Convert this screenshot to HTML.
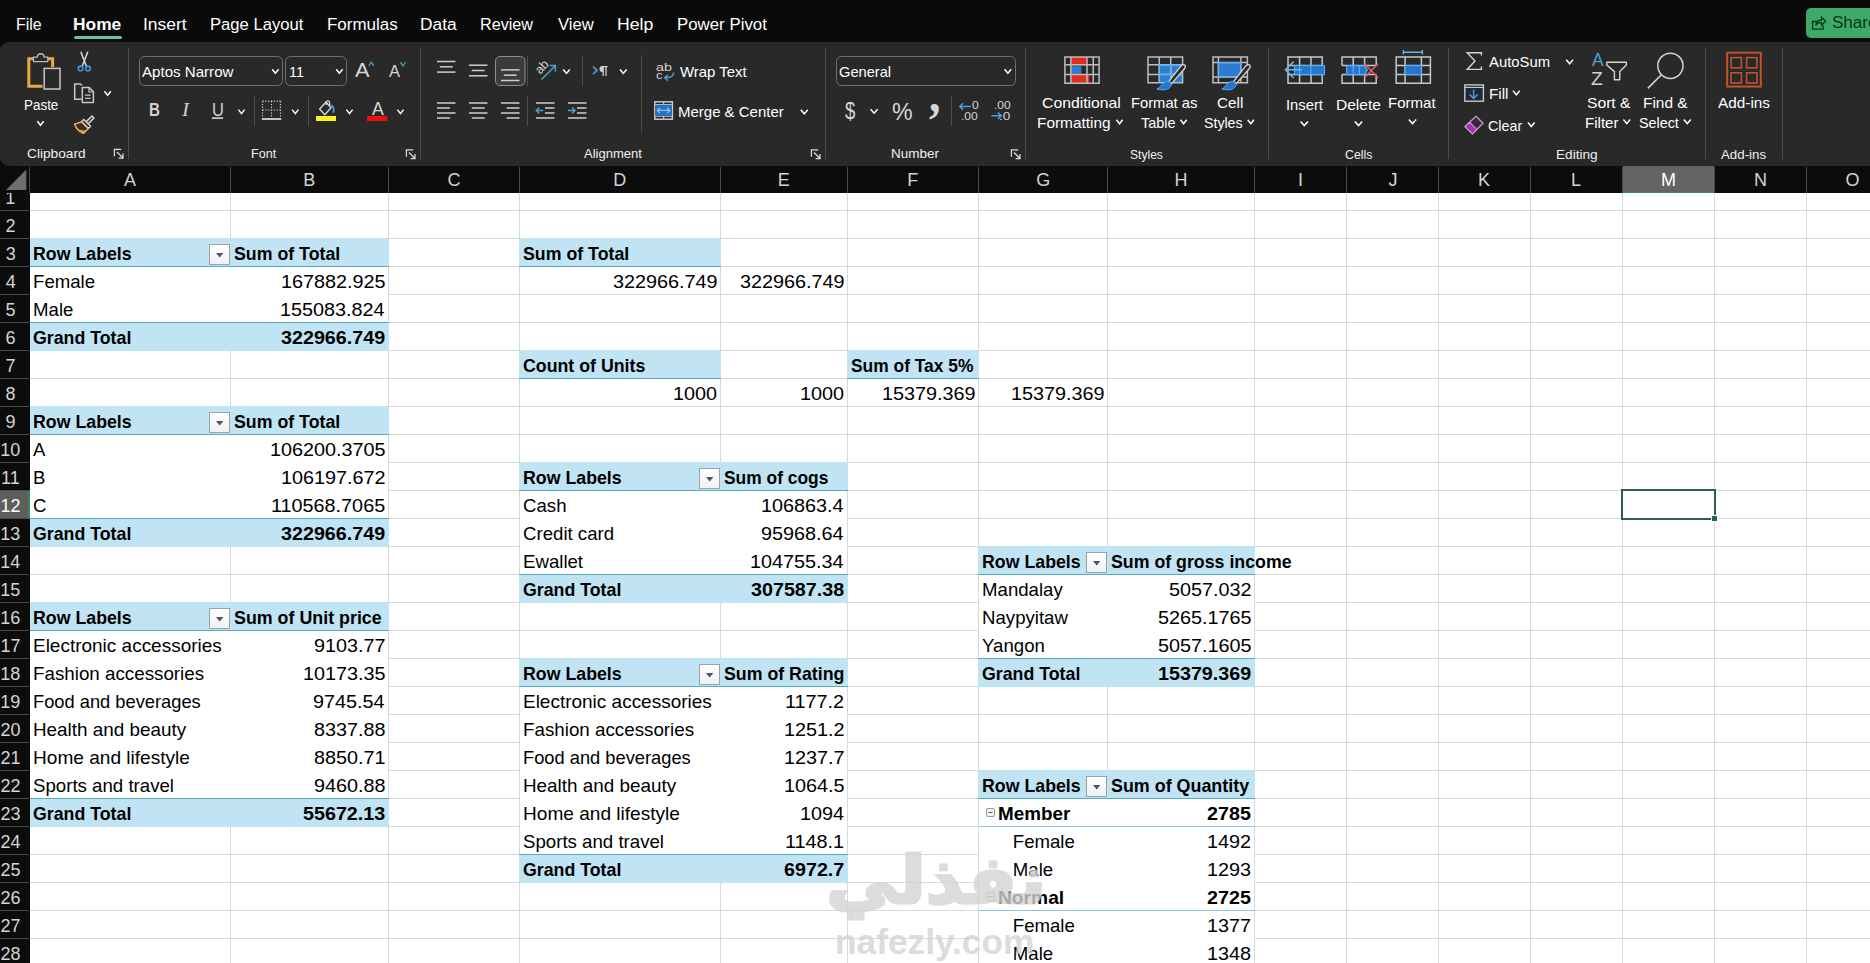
<!DOCTYPE html>
<html lang="en"><head><meta charset="utf-8"><title>Excel - Pivot Tables</title>
<style>
html,body{margin:0;padding:0;background:#0a0a0a;}
body{width:1870px;height:963px;overflow:hidden;position:relative;font-family:"Liberation Sans",sans-serif;color:#fff;}
.t{position:absolute;white-space:pre;line-height:1;transform-origin:0 50%;}
.r{position:absolute;}
svg{position:absolute;left:0;top:0;overflow:visible;}
</style></head>
<body>
<div id="sheet" class="r" style="left:0;top:166px;width:1870px;height:797px;background:#fff;overflow:hidden"></div>
<div class="r" style="left:30px;top:210px;width:1840px;height:1px;background:#d9d9d9;"></div>
<div class="r" style="left:30px;top:238px;width:1840px;height:1px;background:#d9d9d9;"></div>
<div class="r" style="left:30px;top:266px;width:1840px;height:1px;background:#d9d9d9;"></div>
<div class="r" style="left:30px;top:294px;width:1840px;height:1px;background:#d9d9d9;"></div>
<div class="r" style="left:30px;top:322px;width:1840px;height:1px;background:#d9d9d9;"></div>
<div class="r" style="left:30px;top:350px;width:1840px;height:1px;background:#d9d9d9;"></div>
<div class="r" style="left:30px;top:378px;width:1840px;height:1px;background:#d9d9d9;"></div>
<div class="r" style="left:30px;top:406px;width:1840px;height:1px;background:#d9d9d9;"></div>
<div class="r" style="left:30px;top:434px;width:1840px;height:1px;background:#d9d9d9;"></div>
<div class="r" style="left:30px;top:462px;width:1840px;height:1px;background:#d9d9d9;"></div>
<div class="r" style="left:30px;top:490px;width:1840px;height:1px;background:#d9d9d9;"></div>
<div class="r" style="left:30px;top:518px;width:1840px;height:1px;background:#d9d9d9;"></div>
<div class="r" style="left:30px;top:546px;width:1840px;height:1px;background:#d9d9d9;"></div>
<div class="r" style="left:30px;top:574px;width:1840px;height:1px;background:#d9d9d9;"></div>
<div class="r" style="left:30px;top:602px;width:1840px;height:1px;background:#d9d9d9;"></div>
<div class="r" style="left:30px;top:630px;width:1840px;height:1px;background:#d9d9d9;"></div>
<div class="r" style="left:30px;top:658px;width:1840px;height:1px;background:#d9d9d9;"></div>
<div class="r" style="left:30px;top:686px;width:1840px;height:1px;background:#d9d9d9;"></div>
<div class="r" style="left:30px;top:714px;width:1840px;height:1px;background:#d9d9d9;"></div>
<div class="r" style="left:30px;top:742px;width:1840px;height:1px;background:#d9d9d9;"></div>
<div class="r" style="left:30px;top:770px;width:1840px;height:1px;background:#d9d9d9;"></div>
<div class="r" style="left:30px;top:798px;width:1840px;height:1px;background:#d9d9d9;"></div>
<div class="r" style="left:30px;top:826px;width:1840px;height:1px;background:#d9d9d9;"></div>
<div class="r" style="left:30px;top:854px;width:1840px;height:1px;background:#d9d9d9;"></div>
<div class="r" style="left:30px;top:882px;width:1840px;height:1px;background:#d9d9d9;"></div>
<div class="r" style="left:30px;top:910px;width:1840px;height:1px;background:#d9d9d9;"></div>
<div class="r" style="left:30px;top:938px;width:1840px;height:1px;background:#d9d9d9;"></div>
<div class="r" style="left:30px;top:966px;width:1840px;height:1px;background:#d9d9d9;"></div>
<div class="r" style="left:230px;top:193px;width:1px;height:770px;background:#d9d9d9;"></div>
<div class="r" style="left:388px;top:193px;width:1px;height:770px;background:#d9d9d9;"></div>
<div class="r" style="left:519px;top:193px;width:1px;height:770px;background:#d9d9d9;"></div>
<div class="r" style="left:720px;top:193px;width:1px;height:770px;background:#d9d9d9;"></div>
<div class="r" style="left:847px;top:193px;width:1px;height:770px;background:#d9d9d9;"></div>
<div class="r" style="left:978px;top:193px;width:1px;height:770px;background:#d9d9d9;"></div>
<div class="r" style="left:1107px;top:193px;width:1px;height:770px;background:#d9d9d9;"></div>
<div class="r" style="left:1254px;top:193px;width:1px;height:770px;background:#d9d9d9;"></div>
<div class="r" style="left:1346px;top:193px;width:1px;height:770px;background:#d9d9d9;"></div>
<div class="r" style="left:1438px;top:193px;width:1px;height:770px;background:#d9d9d9;"></div>
<div class="r" style="left:1530px;top:193px;width:1px;height:770px;background:#d9d9d9;"></div>
<div class="r" style="left:1622px;top:193px;width:1px;height:770px;background:#d9d9d9;"></div>
<div class="r" style="left:1714px;top:193px;width:1px;height:770px;background:#d9d9d9;"></div>
<div class="r" style="left:1806px;top:193px;width:1px;height:770px;background:#d9d9d9;"></div>
<div class="r" style="left:30px;top:267px;width:358px;height:55px;background:#fff;"></div>
<div class="r" style="left:30px;top:435px;width:358px;height:83px;background:#fff;"></div>
<div class="r" style="left:30px;top:631px;width:358px;height:167px;background:#fff;"></div>
<div class="r" style="left:520px;top:491px;width:327px;height:83px;background:#fff;"></div>
<div class="r" style="left:520px;top:687px;width:327px;height:167px;background:#fff;"></div>
<div class="r" style="left:979px;top:575px;width:275px;height:83px;background:#fff;"></div>
<div class="r" style="left:520px;top:267px;width:200px;height:27px;background:#fff;"></div>
<div class="r" style="left:520px;top:379px;width:200px;height:27px;background:#fff;"></div>
<div class="r" style="left:848px;top:379px;width:130px;height:27px;background:#fff;"></div>
<div class="r" style="left:979px;top:799px;width:275px;height:167px;background:#fff;"></div>
<div class="r" style="left:29px;top:238px;width:360px;height:28px;background:#c0e4f4;"></div>
<div class="r" style="left:29px;top:266px;width:360px;height:1px;background:#5aa6c6;"></div>
<div class="r" style="left:29px;top:322px;width:360px;height:29px;background:#c0e4f4;"></div>
<div class="r" style="left:29px;top:322px;width:360px;height:1px;background:#5aa6c6;"></div>
<div class="r" style="left:29px;top:406px;width:360px;height:28px;background:#c0e4f4;"></div>
<div class="r" style="left:29px;top:434px;width:360px;height:1px;background:#5aa6c6;"></div>
<div class="r" style="left:29px;top:518px;width:360px;height:29px;background:#c0e4f4;"></div>
<div class="r" style="left:29px;top:518px;width:360px;height:1px;background:#5aa6c6;"></div>
<div class="r" style="left:29px;top:602px;width:360px;height:28px;background:#c0e4f4;"></div>
<div class="r" style="left:29px;top:630px;width:360px;height:1px;background:#5aa6c6;"></div>
<div class="r" style="left:29px;top:798px;width:360px;height:29px;background:#c0e4f4;"></div>
<div class="r" style="left:29px;top:798px;width:360px;height:1px;background:#5aa6c6;"></div>
<div class="r" style="left:519px;top:462px;width:329px;height:28px;background:#c0e4f4;"></div>
<div class="r" style="left:519px;top:490px;width:329px;height:1px;background:#5aa6c6;"></div>
<div class="r" style="left:519px;top:574px;width:329px;height:29px;background:#c0e4f4;"></div>
<div class="r" style="left:519px;top:574px;width:329px;height:1px;background:#5aa6c6;"></div>
<div class="r" style="left:519px;top:658px;width:329px;height:28px;background:#c0e4f4;"></div>
<div class="r" style="left:519px;top:686px;width:329px;height:1px;background:#5aa6c6;"></div>
<div class="r" style="left:519px;top:854px;width:329px;height:29px;background:#c0e4f4;"></div>
<div class="r" style="left:519px;top:854px;width:329px;height:1px;background:#5aa6c6;"></div>
<div class="r" style="left:978px;top:546px;width:277px;height:28px;background:#c0e4f4;"></div>
<div class="r" style="left:978px;top:574px;width:277px;height:1px;background:#5aa6c6;"></div>
<div class="r" style="left:978px;top:658px;width:277px;height:29px;background:#c0e4f4;"></div>
<div class="r" style="left:978px;top:658px;width:277px;height:1px;background:#5aa6c6;"></div>
<div class="r" style="left:519px;top:238px;width:202px;height:28px;background:#c0e4f4;"></div>
<div class="r" style="left:519px;top:266px;width:202px;height:1px;background:#5aa6c6;"></div>
<div class="r" style="left:519px;top:350px;width:202px;height:28px;background:#c0e4f4;"></div>
<div class="r" style="left:519px;top:378px;width:202px;height:1px;background:#5aa6c6;"></div>
<div class="r" style="left:847px;top:350px;width:132px;height:28px;background:#c0e4f4;"></div>
<div class="r" style="left:847px;top:378px;width:132px;height:1px;background:#5aa6c6;"></div>
<div class="r" style="left:978px;top:770px;width:277px;height:28px;background:#c0e4f4;"></div>
<div class="r" style="left:978px;top:798px;width:277px;height:1px;background:#5aa6c6;"></div>
<div class="r" style="left:979px;top:826px;width:276px;height:1px;background:#8cc6de;"></div>
<span class="t" style="left:997.67px;top:804.50px;font-size:18.6px;transform:scaleX(1.0137);font-weight:700;color:#000;">Member</span>
<span class="t" style="left:1207.12px;top:804.50px;font-size:18.6px;transform:scaleX(1.0600);font-weight:700;color:#000;">2785</span>
<svg width="10" height="10" style="left:986px;top:807.5px" viewBox="0 0 10 10"><rect x="0.5" y="0.5" width="8" height="8" rx="1.5" fill="#f4f4f4" stroke="#9a9a9a"/><path d="M2.5 4.5h4" stroke="#555" stroke-width="1"/></svg>
<span class="t" style="left:1012.81px;top:832.50px;font-size:18.6px;color:#000;">Female</span>
<span class="t" style="left:1207.42px;top:832.50px;font-size:18.6px;transform:scaleX(1.0650);color:#000;">1492</span>
<span class="t" style="left:1012.81px;top:860.50px;font-size:18.6px;color:#000;">Male</span>
<span class="t" style="left:1207.22px;top:860.50px;font-size:18.6px;transform:scaleX(1.0650);color:#000;">1293</span>
<div class="r" style="left:979px;top:910px;width:276px;height:1px;background:#8cc6de;"></div>
<span class="t" style="left:997.65px;top:888.50px;font-size:18.6px;transform:scaleX(1.0331);font-weight:700;color:#000;">Normal</span>
<span class="t" style="left:1207.12px;top:888.50px;font-size:18.6px;transform:scaleX(1.0600);font-weight:700;color:#000;">2725</span>
<svg width="10" height="10" style="left:986px;top:891.5px" viewBox="0 0 10 10"><rect x="0.5" y="0.5" width="8" height="8" rx="1.5" fill="#f4f4f4" stroke="#9a9a9a"/><path d="M2.5 4.5h4" stroke="#555" stroke-width="1"/></svg>
<span class="t" style="left:1012.81px;top:916.50px;font-size:18.6px;color:#000;">Female</span>
<span class="t" style="left:1207.42px;top:916.50px;font-size:18.6px;transform:scaleX(1.0650);color:#000;">1377</span>
<span class="t" style="left:1012.81px;top:944.50px;font-size:18.6px;color:#000;">Male</span>
<span class="t" style="left:1207.22px;top:944.50px;font-size:18.6px;transform:scaleX(1.0650);color:#000;">1348</span>
<div class="r" style="left:209px;top:244px;width:19px;height:19px;border:1px solid #9aa3a8;background:linear-gradient(#ffffff,#f1f1f6);"></div>
<svg width="8" height="5" style="left:216px;top:253px" viewBox="0 0 8 5"><path d="M0 0h7.4L3.7 4.4z" fill="#555"/></svg>
<div class="r" style="left:209px;top:412px;width:19px;height:19px;border:1px solid #9aa3a8;background:linear-gradient(#ffffff,#f1f1f6);"></div>
<svg width="8" height="5" style="left:216px;top:421px" viewBox="0 0 8 5"><path d="M0 0h7.4L3.7 4.4z" fill="#555"/></svg>
<div class="r" style="left:209px;top:608px;width:19px;height:19px;border:1px solid #9aa3a8;background:linear-gradient(#ffffff,#f1f1f6);"></div>
<svg width="8" height="5" style="left:216px;top:617px" viewBox="0 0 8 5"><path d="M0 0h7.4L3.7 4.4z" fill="#555"/></svg>
<div class="r" style="left:699px;top:468px;width:19px;height:19px;border:1px solid #9aa3a8;background:linear-gradient(#ffffff,#f1f1f6);"></div>
<svg width="8" height="5" style="left:706px;top:477px" viewBox="0 0 8 5"><path d="M0 0h7.4L3.7 4.4z" fill="#555"/></svg>
<div class="r" style="left:699px;top:664px;width:19px;height:19px;border:1px solid #9aa3a8;background:linear-gradient(#ffffff,#f1f1f6);"></div>
<svg width="8" height="5" style="left:706px;top:673px" viewBox="0 0 8 5"><path d="M0 0h7.4L3.7 4.4z" fill="#555"/></svg>
<div class="r" style="left:1086px;top:552px;width:19px;height:19px;border:1px solid #9aa3a8;background:linear-gradient(#ffffff,#f1f1f6);"></div>
<svg width="8" height="5" style="left:1093px;top:561px" viewBox="0 0 8 5"><path d="M0 0h7.4L3.7 4.4z" fill="#555"/></svg>
<div class="r" style="left:1086px;top:776px;width:19px;height:19px;border:1px solid #9aa3a8;background:linear-gradient(#ffffff,#f1f1f6);"></div>
<svg width="8" height="5" style="left:1093px;top:785px" viewBox="0 0 8 5"><path d="M0 0h7.4L3.7 4.4z" fill="#555"/></svg>
<span class="t" style="left:33.00px;top:244.50px;font-size:18.6px;transform:scaleX(0.9550);font-weight:700;color:#000;">Row Labels</span>
<span class="t" style="left:234.00px;top:244.50px;font-size:18.6px;transform:scaleX(0.9550);font-weight:700;color:#000;">Sum of Total</span>
<span class="t" style="left:33.10px;top:272.50px;font-size:18.6px;color:#000;">Female</span>
<span class="t" style="left:280.70px;top:272.50px;font-size:18.6px;transform:scaleX(1.0650);color:#000;">167882.925</span>
<span class="t" style="left:33.10px;top:300.50px;font-size:18.6px;color:#000;">Male</span>
<span class="t" style="left:280.40px;top:300.50px;font-size:18.6px;transform:scaleX(1.0650);color:#000;">155083.824</span>
<span class="t" style="left:33.00px;top:328.50px;font-size:18.6px;transform:scaleX(0.9550);font-weight:700;color:#000;">Grand Total</span>
<span class="t" style="left:281.09px;top:328.50px;font-size:18.6px;transform:scaleX(1.0600);font-weight:700;color:#000;">322966.749</span>
<span class="t" style="left:33.00px;top:412.50px;font-size:18.6px;transform:scaleX(0.9550);font-weight:700;color:#000;">Row Labels</span>
<span class="t" style="left:234.00px;top:412.50px;font-size:18.6px;transform:scaleX(0.9550);font-weight:700;color:#000;">Sum of Total</span>
<span class="t" style="left:33.10px;top:440.50px;font-size:18.6px;color:#000;">A</span>
<span class="t" style="left:269.61px;top:440.50px;font-size:18.6px;transform:scaleX(1.0650);color:#000;">106200.3705</span>
<span class="t" style="left:33.10px;top:468.50px;font-size:18.6px;color:#000;">B</span>
<span class="t" style="left:280.90px;top:468.50px;font-size:18.6px;transform:scaleX(1.0650);color:#000;">106197.672</span>
<span class="t" style="left:33.10px;top:496.50px;font-size:18.6px;color:#000;">C</span>
<span class="t" style="left:271.09px;top:496.50px;font-size:18.6px;transform:scaleX(1.0650);color:#000;">110568.7065</span>
<span class="t" style="left:33.00px;top:524.50px;font-size:18.6px;transform:scaleX(0.9550);font-weight:700;color:#000;">Grand Total</span>
<span class="t" style="left:281.09px;top:524.50px;font-size:18.6px;transform:scaleX(1.0600);font-weight:700;color:#000;">322966.749</span>
<span class="t" style="left:33.00px;top:608.50px;font-size:18.6px;transform:scaleX(0.9550);font-weight:700;color:#000;">Row Labels</span>
<span class="t" style="left:234.00px;top:608.50px;font-size:18.6px;transform:scaleX(0.9594);font-weight:700;color:#000;">Sum of Unit price</span>
<span class="t" style="left:33.10px;top:636.50px;font-size:18.6px;transform:scaleX(1.0206);color:#000;">Electronic accessories</span>
<span class="t" style="left:313.88px;top:636.50px;font-size:18.6px;transform:scaleX(1.0650);color:#000;">9103.77</span>
<span class="t" style="left:33.10px;top:664.50px;font-size:18.6px;transform:scaleX(1.0096);color:#000;">Fashion accessories</span>
<span class="t" style="left:302.69px;top:664.50px;font-size:18.6px;transform:scaleX(1.0650);color:#000;">10173.35</span>
<span class="t" style="left:33.10px;top:692.50px;font-size:18.6px;transform:scaleX(0.9833);color:#000;">Food and beverages</span>
<span class="t" style="left:313.39px;top:692.50px;font-size:18.6px;transform:scaleX(1.0650);color:#000;">9745.54</span>
<span class="t" style="left:33.10px;top:720.50px;font-size:18.6px;transform:scaleX(1.0144);color:#000;">Health and beauty</span>
<span class="t" style="left:313.68px;top:720.50px;font-size:18.6px;transform:scaleX(1.0650);color:#000;">8337.88</span>
<span class="t" style="left:33.10px;top:748.50px;font-size:18.6px;transform:scaleX(1.0262);color:#000;">Home and lifestyle</span>
<span class="t" style="left:313.78px;top:748.50px;font-size:18.6px;transform:scaleX(1.0650);color:#000;">8850.71</span>
<span class="t" style="left:33.10px;top:776.50px;font-size:18.6px;transform:scaleX(1.0031);color:#000;">Sports and travel</span>
<span class="t" style="left:313.68px;top:776.50px;font-size:18.6px;transform:scaleX(1.0650);color:#000;">9460.88</span>
<span class="t" style="left:33.00px;top:804.50px;font-size:18.6px;transform:scaleX(0.9550);font-weight:700;color:#000;">Grand Total</span>
<span class="t" style="left:302.97px;top:804.50px;font-size:18.6px;transform:scaleX(1.0600);font-weight:700;color:#000;">55672.13</span>
<span class="t" style="left:523.00px;top:468.50px;font-size:18.6px;transform:scaleX(0.9550);font-weight:700;color:#000;">Row Labels</span>
<span class="t" style="left:724.00px;top:468.50px;font-size:18.6px;transform:scaleX(0.9356);font-weight:700;color:#000;">Sum of cogs</span>
<span class="t" style="left:523.10px;top:496.50px;font-size:18.6px;color:#000;">Cash</span>
<span class="t" style="left:761.39px;top:496.50px;font-size:18.6px;transform:scaleX(1.0650);color:#000;">106863.4</span>
<span class="t" style="left:523.10px;top:524.50px;font-size:18.6px;color:#000;">Credit card</span>
<span class="t" style="left:761.39px;top:524.50px;font-size:18.6px;transform:scaleX(1.0650);color:#000;">95968.64</span>
<span class="t" style="left:523.10px;top:552.50px;font-size:18.6px;color:#000;">Ewallet</span>
<span class="t" style="left:750.40px;top:552.50px;font-size:18.6px;transform:scaleX(1.0650);color:#000;">104755.34</span>
<span class="t" style="left:523.00px;top:580.50px;font-size:18.6px;transform:scaleX(0.9550);font-weight:700;color:#000;">Grand Total</span>
<span class="t" style="left:750.93px;top:580.50px;font-size:18.6px;transform:scaleX(1.0600);font-weight:700;color:#000;">307587.38</span>
<span class="t" style="left:523.00px;top:664.50px;font-size:18.6px;transform:scaleX(0.9550);font-weight:700;color:#000;">Row Labels</span>
<span class="t" style="left:724.00px;top:664.50px;font-size:18.6px;transform:scaleX(0.9550);font-weight:700;color:#000;">Sum of Rating</span>
<span class="t" style="left:523.10px;top:692.50px;font-size:18.6px;transform:scaleX(1.0206);color:#000;">Electronic accessories</span>
<span class="t" style="left:785.36px;top:692.50px;font-size:18.6px;transform:scaleX(1.0650);color:#000;">1177.2</span>
<span class="t" style="left:523.10px;top:720.50px;font-size:18.6px;transform:scaleX(1.0096);color:#000;">Fashion accessories</span>
<span class="t" style="left:783.87px;top:720.50px;font-size:18.6px;transform:scaleX(1.0650);color:#000;">1251.2</span>
<span class="t" style="left:523.10px;top:748.50px;font-size:18.6px;transform:scaleX(0.9833);color:#000;">Food and beverages</span>
<span class="t" style="left:783.87px;top:748.50px;font-size:18.6px;transform:scaleX(1.0650);color:#000;">1237.7</span>
<span class="t" style="left:523.10px;top:776.50px;font-size:18.6px;transform:scaleX(1.0144);color:#000;">Health and beauty</span>
<span class="t" style="left:783.68px;top:776.50px;font-size:18.6px;transform:scaleX(1.0650);color:#000;">1064.5</span>
<span class="t" style="left:523.10px;top:804.50px;font-size:18.6px;transform:scaleX(1.0262);color:#000;">Home and lifestyle</span>
<span class="t" style="left:799.92px;top:804.50px;font-size:18.6px;transform:scaleX(1.0650);color:#000;">1094</span>
<span class="t" style="left:523.10px;top:832.50px;font-size:18.6px;transform:scaleX(1.0031);color:#000;">Sports and travel</span>
<span class="t" style="left:785.26px;top:832.50px;font-size:18.6px;transform:scaleX(1.0650);color:#000;">1148.1</span>
<span class="t" style="left:523.00px;top:860.50px;font-size:18.6px;transform:scaleX(0.9550);font-weight:700;color:#000;">Grand Total</span>
<span class="t" style="left:783.96px;top:860.50px;font-size:18.6px;transform:scaleX(1.0600);font-weight:700;color:#000;">6972.7</span>
<span class="t" style="left:982.00px;top:552.50px;font-size:18.6px;transform:scaleX(0.9550);font-weight:700;color:#000;">Row Labels</span>
<span class="t" style="left:1111.00px;top:552.50px;font-size:18.6px;transform:scaleX(0.9550);font-weight:700;color:#000;">Sum of gross income</span>
<span class="t" style="left:982.10px;top:580.50px;font-size:18.6px;color:#000;">Mandalay</span>
<span class="t" style="left:1168.89px;top:580.50px;font-size:18.6px;transform:scaleX(1.0650);color:#000;">5057.032</span>
<span class="t" style="left:982.10px;top:608.50px;font-size:18.6px;color:#000;">Naypyitaw</span>
<span class="t" style="left:1157.69px;top:608.50px;font-size:18.6px;transform:scaleX(1.0650);color:#000;">5265.1765</span>
<span class="t" style="left:982.10px;top:636.50px;font-size:18.6px;color:#000;">Yangon</span>
<span class="t" style="left:1157.69px;top:636.50px;font-size:18.6px;transform:scaleX(1.0650);color:#000;">5057.1605</span>
<span class="t" style="left:982.00px;top:664.50px;font-size:18.6px;transform:scaleX(0.9550);font-weight:700;color:#000;">Grand Total</span>
<span class="t" style="left:1158.03px;top:664.50px;font-size:18.6px;transform:scaleX(1.0600);font-weight:700;color:#000;">15379.369</span>
<span class="t" style="left:523.00px;top:244.50px;font-size:18.6px;transform:scaleX(0.9550);font-weight:700;color:#000;">Sum of Total</span>
<span class="t" style="left:612.80px;top:272.50px;font-size:18.6px;transform:scaleX(1.0650);color:#000;">322966.749</span>
<span class="t" style="left:739.80px;top:272.50px;font-size:18.6px;transform:scaleX(1.0650);color:#000;">322966.749</span>
<span class="t" style="left:523.00px;top:356.50px;font-size:18.6px;transform:scaleX(0.9550);font-weight:700;color:#000;">Count of Units</span>
<span class="t" style="left:673.12px;top:384.50px;font-size:18.6px;transform:scaleX(1.0650);color:#000;">1000</span>
<span class="t" style="left:800.12px;top:384.50px;font-size:18.6px;transform:scaleX(1.0650);color:#000;">1000</span>
<span class="t" style="left:851.00px;top:356.50px;font-size:18.6px;transform:scaleX(0.9352);font-weight:700;color:#000;">Sum of Tax 5%</span>
<span class="t" style="left:881.79px;top:384.50px;font-size:18.6px;transform:scaleX(1.0650);color:#000;">15379.369</span>
<span class="t" style="left:1010.79px;top:384.50px;font-size:18.6px;transform:scaleX(1.0650);color:#000;">15379.369</span>
<span class="t" style="left:982.00px;top:776.50px;font-size:18.6px;transform:scaleX(0.9550);font-weight:700;color:#000;">Row Labels</span>
<span class="t" style="left:1111.00px;top:776.50px;font-size:18.6px;transform:scaleX(0.9619);font-weight:700;color:#000;">Sum of Quantity</span>
<div class="r" style="left:1621px;top:489px;width:95px;height:31px;background:transparent;border:2px solid #2a6049;box-sizing:border-box;"></div>
<div class="r" style="left:1711px;top:515px;width:7px;height:7px;background:#fff;"></div>
<div class="r" style="left:1712px;top:516px;width:5px;height:5px;background:#2a6049;"></div>
<div class="r" style="left:0px;top:166px;width:1870px;height:27px;background:#0c0c0c;"></div>
<div class="r" style="left:0px;top:193px;width:30px;height:770px;background:#0c0c0c;"></div>
<div class="r" style="left:1623px;top:166px;width:91px;height:26px;background:#636363;"></div>
<div class="r" style="left:1622px;top:192px;width:93px;height:1px;background:#2f8a5f;"></div>
<div class="r" style="left:29px;top:167px;width:1px;height:26px;background:#4a4a4a;"></div>
<span class="t" style="left:124.02px;top:171.30px;font-size:18px;color:#d4d4d4;">A</span>
<div class="r" style="left:230px;top:167px;width:1px;height:26px;background:#4a4a4a;"></div>
<span class="t" style="left:303.25px;top:171.30px;font-size:18px;color:#d4d4d4;">B</span>
<div class="r" style="left:388px;top:167px;width:1px;height:26px;background:#4a4a4a;"></div>
<span class="t" style="left:447.39px;top:171.30px;font-size:18px;color:#d4d4d4;">C</span>
<div class="r" style="left:519px;top:167px;width:1px;height:26px;background:#4a4a4a;"></div>
<span class="t" style="left:613.20px;top:171.30px;font-size:18px;color:#d4d4d4;">D</span>
<div class="r" style="left:720px;top:167px;width:1px;height:26px;background:#4a4a4a;"></div>
<span class="t" style="left:777.65px;top:171.30px;font-size:18px;color:#d4d4d4;">E</span>
<div class="r" style="left:847px;top:167px;width:1px;height:26px;background:#4a4a4a;"></div>
<span class="t" style="left:907.15px;top:171.30px;font-size:18px;color:#d4d4d4;">F</span>
<div class="r" style="left:978px;top:167px;width:1px;height:26px;background:#4a4a4a;"></div>
<span class="t" style="left:1036.20px;top:171.30px;font-size:18px;color:#d4d4d4;">G</span>
<div class="r" style="left:1107px;top:167px;width:1px;height:26px;background:#4a4a4a;"></div>
<span class="t" style="left:1174.52px;top:171.30px;font-size:18px;color:#d4d4d4;">H</span>
<div class="r" style="left:1254px;top:167px;width:1px;height:26px;background:#4a4a4a;"></div>
<span class="t" style="left:1298.03px;top:171.30px;font-size:18px;color:#d4d4d4;">I</span>
<div class="r" style="left:1346px;top:167px;width:1px;height:26px;background:#4a4a4a;"></div>
<span class="t" style="left:1388.54px;top:171.30px;font-size:18px;color:#d4d4d4;">J</span>
<div class="r" style="left:1438px;top:167px;width:1px;height:26px;background:#4a4a4a;"></div>
<span class="t" style="left:1477.88px;top:171.30px;font-size:18px;color:#d4d4d4;">K</span>
<div class="r" style="left:1530px;top:167px;width:1px;height:26px;background:#4a4a4a;"></div>
<span class="t" style="left:1571.05px;top:171.30px;font-size:18px;color:#d4d4d4;">L</span>
<div class="r" style="left:1622px;top:167px;width:1px;height:26px;background:#4a4a4a;"></div>
<span class="t" style="left:1661.03px;top:171.30px;font-size:18px;">M</span>
<div class="r" style="left:1714px;top:167px;width:1px;height:26px;background:#4a4a4a;"></div>
<span class="t" style="left:1754.02px;top:171.30px;font-size:18px;color:#d4d4d4;">N</span>
<div class="r" style="left:1806px;top:167px;width:1px;height:26px;background:#4a4a4a;"></div>
<span class="t" style="left:1845.53px;top:171.30px;font-size:18px;color:#d4d4d4;">O</span>
<svg width="30" height="27" style="left:0;top:166px" viewBox="0 0 30 27"><path d="M26.3 3.5V24H6z" fill="#6e6e6e"/></svg>
<div class="r" style="left:0px;top:491px;width:29px;height:27px;background:#5e5e5e;"></div>
<div class="r" style="left:28px;top:490px;width:2px;height:29px;background:#2f8a5f;"></div>
<div class="r" style="left:0px;top:210px;width:29px;height:1px;background:#4a4a4a;"></div>
<span class="t" style="left:5.33px;top:189.30px;font-size:18px;color:#d4d4d4;">1</span>
<div class="r" style="left:0px;top:238px;width:29px;height:1px;background:#4a4a4a;"></div>
<span class="t" style="left:5.60px;top:217.30px;font-size:18px;color:#d4d4d4;">2</span>
<div class="r" style="left:0px;top:266px;width:29px;height:1px;background:#4a4a4a;"></div>
<span class="t" style="left:5.65px;top:245.30px;font-size:18px;color:#d4d4d4;">3</span>
<div class="r" style="left:0px;top:294px;width:29px;height:1px;background:#4a4a4a;"></div>
<span class="t" style="left:5.65px;top:273.30px;font-size:18px;color:#d4d4d4;">4</span>
<div class="r" style="left:0px;top:322px;width:29px;height:1px;background:#4a4a4a;"></div>
<span class="t" style="left:5.61px;top:301.30px;font-size:18px;color:#d4d4d4;">5</span>
<div class="r" style="left:0px;top:350px;width:29px;height:1px;background:#4a4a4a;"></div>
<span class="t" style="left:5.51px;top:329.30px;font-size:18px;color:#d4d4d4;">6</span>
<div class="r" style="left:0px;top:378px;width:29px;height:1px;background:#4a4a4a;"></div>
<span class="t" style="left:5.60px;top:357.30px;font-size:18px;color:#d4d4d4;">7</span>
<div class="r" style="left:0px;top:406px;width:29px;height:1px;background:#4a4a4a;"></div>
<span class="t" style="left:5.61px;top:385.30px;font-size:18px;color:#d4d4d4;">8</span>
<div class="r" style="left:0px;top:434px;width:29px;height:1px;background:#4a4a4a;"></div>
<span class="t" style="left:5.60px;top:413.30px;font-size:18px;color:#d4d4d4;">9</span>
<div class="r" style="left:0px;top:462px;width:29px;height:1px;background:#4a4a4a;"></div>
<span class="t" style="left:0.25px;top:441.30px;font-size:18px;color:#d4d4d4;">10</span>
<div class="r" style="left:0px;top:490px;width:29px;height:1px;background:#4a4a4a;"></div>
<span class="t" style="left:1.02px;top:469.30px;font-size:18px;color:#d4d4d4;">11</span>
<div class="r" style="left:0px;top:518px;width:29px;height:1px;background:#4a4a4a;"></div>
<span class="t" style="left:0.38px;top:497.30px;font-size:18px;">12</span>
<div class="r" style="left:0px;top:546px;width:29px;height:1px;background:#4a4a4a;"></div>
<span class="t" style="left:0.29px;top:525.30px;font-size:18px;color:#d4d4d4;">13</span>
<div class="r" style="left:0px;top:574px;width:29px;height:1px;background:#4a4a4a;"></div>
<span class="t" style="left:0.16px;top:553.30px;font-size:18px;color:#d4d4d4;">14</span>
<div class="r" style="left:0px;top:602px;width:29px;height:1px;background:#4a4a4a;"></div>
<span class="t" style="left:0.29px;top:581.30px;font-size:18px;color:#d4d4d4;">15</span>
<div class="r" style="left:0px;top:630px;width:29px;height:1px;background:#4a4a4a;"></div>
<span class="t" style="left:0.29px;top:609.30px;font-size:18px;color:#d4d4d4;">16</span>
<div class="r" style="left:0px;top:658px;width:29px;height:1px;background:#4a4a4a;"></div>
<span class="t" style="left:0.38px;top:637.30px;font-size:18px;color:#d4d4d4;">17</span>
<div class="r" style="left:0px;top:686px;width:29px;height:1px;background:#4a4a4a;"></div>
<span class="t" style="left:0.29px;top:665.30px;font-size:18px;color:#d4d4d4;">18</span>
<div class="r" style="left:0px;top:714px;width:29px;height:1px;background:#4a4a4a;"></div>
<span class="t" style="left:0.34px;top:693.30px;font-size:18px;color:#d4d4d4;">19</span>
<div class="r" style="left:0px;top:742px;width:29px;height:1px;background:#4a4a4a;"></div>
<span class="t" style="left:0.47px;top:721.30px;font-size:18px;color:#d4d4d4;">20</span>
<div class="r" style="left:0px;top:770px;width:29px;height:1px;background:#4a4a4a;"></div>
<span class="t" style="left:0.56px;top:749.30px;font-size:18px;color:#d4d4d4;">21</span>
<div class="r" style="left:0px;top:798px;width:29px;height:1px;background:#4a4a4a;"></div>
<span class="t" style="left:0.61px;top:777.30px;font-size:18px;color:#d4d4d4;">22</span>
<div class="r" style="left:0px;top:826px;width:29px;height:1px;background:#4a4a4a;"></div>
<span class="t" style="left:0.52px;top:805.30px;font-size:18px;color:#d4d4d4;">23</span>
<div class="r" style="left:0px;top:854px;width:29px;height:1px;background:#4a4a4a;"></div>
<span class="t" style="left:0.39px;top:833.30px;font-size:18px;color:#d4d4d4;">24</span>
<div class="r" style="left:0px;top:882px;width:29px;height:1px;background:#4a4a4a;"></div>
<span class="t" style="left:0.52px;top:861.30px;font-size:18px;color:#d4d4d4;">25</span>
<div class="r" style="left:0px;top:910px;width:29px;height:1px;background:#4a4a4a;"></div>
<span class="t" style="left:0.52px;top:889.30px;font-size:18px;color:#d4d4d4;">26</span>
<div class="r" style="left:0px;top:938px;width:29px;height:1px;background:#4a4a4a;"></div>
<span class="t" style="left:0.61px;top:917.30px;font-size:18px;color:#d4d4d4;">27</span>
<div class="r" style="left:0px;top:966px;width:29px;height:1px;background:#4a4a4a;"></div>
<span class="t" style="left:0.52px;top:945.30px;font-size:18px;color:#d4d4d4;">28</span>
<div class="r" style="left:0px;top:166px;width:29px;height:27px;background:#0c0c0c;"></div>
<svg width="30" height="27" style="left:0;top:166px" viewBox="0 0 30 27"><path d="M26.3 3.5V24H6z" fill="#6e6e6e"/></svg>
<div class="r" style="left:0px;top:0px;width:1870px;height:42px;background:#0a0a0a;"></div>
<div class="r" style="left:0px;top:42px;width:1870px;height:124px;background:#292929;border-radius:9px 0 0 9px;"></div>
<div class="r" style="left:1806px;top:8px;width:80px;height:30px;background:#3fa968;border-radius:5px;"></div>
<span class="t" style="left:1832.23px;top:15.40px;font-size:16.8px;transform:scaleX(1.0151);color:#06381a;">Share</span>
<span class="t" style="left:16.22px;top:16.15px;font-size:16.3px;transform:scaleX(0.9799);">File</span>
<span class="t" style="left:142.82px;top:16.15px;font-size:16.3px;transform:scaleX(1.0739);">Insert</span>
<span class="t" style="left:209.97px;top:16.15px;font-size:16.3px;transform:scaleX(1.0206);">Page Layout</span>
<span class="t" style="left:326.94px;top:16.15px;font-size:16.3px;transform:scaleX(1.0424);">Formulas</span>
<span class="t" style="left:419.91px;top:16.15px;font-size:16.3px;transform:scaleX(1.0638);">Data</span>
<span class="t" style="left:480.00px;top:16.15px;font-size:16.3px;transform:scaleX(0.9931);">Review</span>
<span class="t" style="left:558.22px;top:16.15px;font-size:16.3px;transform:scaleX(1.0211);">View</span>
<span class="t" style="left:616.89px;top:16.15px;font-size:16.3px;transform:scaleX(1.0843);">Help</span>
<span class="t" style="left:676.75px;top:16.15px;font-size:16.3px;transform:scaleX(1.0342);">Power Pivot</span>
<span class="t" style="left:73.27px;top:16.15px;font-size:16.3px;transform:scaleX(1.0668);font-weight:700;">Home</span>
<div class="r" style="left:74.3px;top:36px;width:47.6px;height:3px;background:#6cc39b;border-radius:1.5px;"></div>
<span class="t" style="left:27.02px;top:147.20px;font-size:13.2px;transform:scaleX(1.0374);color:#f0f0f0;">Clipboard</span>
<span class="t" style="left:251.49px;top:147.20px;font-size:13.2px;transform:scaleX(0.9534);color:#f0f0f0;">Font</span>
<span class="t" style="left:584.10px;top:147.20px;font-size:13.2px;transform:scaleX(0.9862);color:#f0f0f0;">Alignment</span>
<span class="t" style="left:890.92px;top:147.20px;font-size:13.2px;transform:scaleX(1.0254);color:#f0f0f0;">Number</span>
<span class="t" style="left:1129.86px;top:148.20px;font-size:13.2px;transform:scaleX(0.9165);color:#f0f0f0;">Styles</span>
<span class="t" style="left:1344.88px;top:148.20px;font-size:13.2px;transform:scaleX(0.9346);color:#f0f0f0;">Cells</span>
<span class="t" style="left:1555.71px;top:148.20px;font-size:13.2px;transform:scaleX(1.0344);color:#f0f0f0;">Editing</span>
<span class="t" style="left:1720.90px;top:148.20px;font-size:13.2px;transform:scaleX(1.0071);color:#f0f0f0;">Add-ins</span>
<span class="t" style="left:23.63px;top:98.30px;font-size:14px;transform:scaleX(0.9592);">Paste</span>
<span class="t" style="left:142.30px;top:65.00px;font-size:14.6px;transform:scaleX(1.0342);">Aptos Narrow</span>
<span class="t" style="left:288.52px;top:65.00px;font-size:14.6px;transform:scaleX(0.9881);">11</span>
<span class="t" style="left:355.20px;top:59.55px;font-size:20.5px;transform:scaleX(1.0636);color:#d6d6d6;">A</span>
<span class="t" style="left:389.00px;top:63.80px;font-size:16px;transform:scaleX(1.0338);color:#d6d6d6;">A</span>
<span class="t" style="left:148.62px;top:101.30px;font-size:18px;transform:scaleX(0.8401);font-weight:700;color:#cfcfcf;">B</span>
<span class="t" style="left:182.11px;top:100.00px;font-size:19.6px;transform:scaleX(1.0741);color:#cfcfcf;font-family:'Liberation Serif',serif;font-style:italic;">I</span>
<span class="t" style="left:211.56px;top:101.30px;font-size:18px;transform:scaleX(0.9162);color:#cfcfcf;">U</span>
<span class="t" style="left:371.60px;top:99.20px;font-size:19.2px;transform:scaleX(0.9242);color:#d6d6d6;">A</span>
<span class="t" style="left:541.5px;top:63.5px;font-size:12.5px;color:#d6d6d6;transform:rotate(-48deg);transform-origin:0 100%;">ab</span>
<span class="t" style="left:656.43px;top:61.90px;font-size:10.8px;transform:scaleX(1.3305);color:#d6d6d6;">ab</span>
<span class="t" style="left:656.49px;top:69.90px;font-size:10.8px;transform:scaleX(1.1920);color:#d6d6d6;">c</span>
<span class="t" style="left:679.53px;top:65.10px;font-size:14.4px;transform:scaleX(1.0362);">Wrap Text</span>
<span class="t" style="left:678.40px;top:105.10px;font-size:14.4px;transform:scaleX(1.0409);">Merge &amp; Center</span>
<span class="t" style="left:838.67px;top:65.00px;font-size:14.6px;transform:scaleX(1.0035);">General</span>
<span class="t" style="left:845.32px;top:98.55px;font-size:24.5px;transform:scaleX(0.7547);color:#d6d6d6;">$</span>
<span class="t" style="left:891.59px;top:100.55px;font-size:23.5px;transform:scaleX(0.9860);color:#d6d6d6;">%</span>
<span class="t" style="left:929.14px;top:69.30px;font-size:50px;transform:scaleX(0.9171);font-weight:700;color:#d6d6d6;font-family:'Liberation Serif',serif;">,</span>
<span class="t" style="left:971.72px;top:99.85px;font-size:10.9px;transform:scaleX(1.1086);color:#d6d6d6;">0</span>
<span class="t" style="left:961.41px;top:110.85px;font-size:10.9px;transform:scaleX(1.1096);color:#d6d6d6;">.00</span>
<span class="t" style="left:993.52px;top:99.85px;font-size:10.9px;transform:scaleX(1.1024);color:#d6d6d6;">.00</span>
<span class="t" style="left:998.98px;top:110.85px;font-size:10.9px;transform:scaleX(1.2405);color:#d6d6d6;">.0</span>
<span class="t" style="left:1041.81px;top:96.10px;font-size:14.4px;transform:scaleX(1.0946);">Conditional</span>
<span class="t" style="left:1037.27px;top:116.10px;font-size:14.4px;transform:scaleX(1.0701);">Formatting</span>
<span class="t" style="left:1131.12px;top:96.10px;font-size:14.4px;transform:scaleX(1.0246);">Format as</span>
<span class="t" style="left:1140.91px;top:116.10px;font-size:14.4px;transform:scaleX(1.0074);">Table</span>
<span class="t" style="left:1216.93px;top:96.10px;font-size:14.4px;transform:scaleX(1.0644);">Cell</span>
<span class="t" style="left:1203.66px;top:116.10px;font-size:14.4px;transform:scaleX(0.9846);">Styles</span>
<span class="t" style="left:1286.17px;top:98.10px;font-size:14.4px;transform:scaleX(1.0251);">Insert</span>
<span class="t" style="left:1336.36px;top:98.10px;font-size:14.4px;transform:scaleX(1.0780);">Delete</span>
<span class="t" style="left:1388.09px;top:96.10px;font-size:14.4px;transform:scaleX(1.0462);">Format</span>
<span class="t" style="left:1489.10px;top:55.10px;font-size:14.4px;transform:scaleX(1.0305);">AutoSum</span>
<span class="t" style="left:1488.58px;top:87.10px;font-size:14.4px;transform:scaleX(1.0570);">Fill</span>
<span class="t" style="left:1488.48px;top:119.10px;font-size:14.4px;transform:scaleX(0.9946);">Clear</span>
<span class="t" style="left:1591.90px;top:52.40px;font-size:17.8px;transform:scaleX(0.9800);color:#4aa0d8;">A</span>
<span class="t" style="left:1591.22px;top:71.40px;font-size:17.8px;transform:scaleX(1.0930);color:#d4d4d4;">Z</span>
<span class="t" style="left:1586.70px;top:96.10px;font-size:14.4px;transform:scaleX(1.0876);">Sort &amp;</span>
<span class="t" style="left:1584.59px;top:116.10px;font-size:14.4px;transform:scaleX(1.0466);">Filter</span>
<span class="t" style="left:1643.26px;top:96.10px;font-size:14.4px;transform:scaleX(1.0739);">Find &amp;</span>
<span class="t" style="left:1639.05px;top:116.10px;font-size:14.4px;transform:scaleX(0.9964);">Select</span>
<span class="t" style="left:1718.30px;top:96.10px;font-size:14.4px;transform:scaleX(1.0660);">Add-ins</span>
<svg id="ribbon-icons" width="1870" height="166" viewBox="0 0 1870 166"><path d="M128.5 48V159" stroke="#4d4d4d" stroke-width="1"/>
<path d="M420.5 48V159" stroke="#4d4d4d" stroke-width="1"/>
<path d="M825.5 48V159" stroke="#4d4d4d" stroke-width="1"/>
<path d="M1025.5 48V159" stroke="#4d4d4d" stroke-width="1"/>
<path d="M1268.5 48V159" stroke="#4d4d4d" stroke-width="1"/>
<path d="M1448.5 48V159" stroke="#4d4d4d" stroke-width="1"/>
<path d="M1705.5 48V159" stroke="#4d4d4d" stroke-width="1"/>
<path d="M1782.5 48V159" stroke="#4d4d4d" stroke-width="1"/>
<path d="M114.4 156.2V149.4H121.2M117 152L122.8 157.8M118.6 158H123V153.6" fill="none" stroke="#dcdcdc" stroke-width="1.25"/>
<path d="M406.4 156.7V149.9H413.2M409 152.5L414.8 158.3M410.6 158.5H415V154.1" fill="none" stroke="#dcdcdc" stroke-width="1.25"/>
<path d="M811.4 156.7V149.9H818.2M814 152.5L819.8 158.3M815.6 158.5H820V154.1" fill="none" stroke="#dcdcdc" stroke-width="1.25"/>
<path d="M1011.4 156.7V149.9H1018.2M1014 152.5L1019.8 158.3M1015.6 158.5H1020V154.1" fill="none" stroke="#dcdcdc" stroke-width="1.25"/>
<path d="M1816.5 21.5H1812.6V29.2H1823.2V25.5M1815.8 25.5C1816 22 1818.5 20 1821.5 20V17.2L1825.6 21.2L1821.5 25.2V22.4C1819 22.3 1817 23.3 1815.8 25.5Z" fill="none" stroke="#06381a" stroke-width="1.3" stroke-linejoin="miter"/>
<path d="M33.5 58.7H28.8V86.3H42.5M48 58.7H52.6V67" fill="none" stroke="#e9a93c" stroke-width="3"/>
<path d="M33.5 61.6V57.2H37.4C37.4 52.6 44 52.6 44 57.2H47.8V61.6Z" fill="#292929" stroke="#bdbdbd" stroke-width="1.3" stroke-linejoin="round"/>
<rect x="44.2" y="68.4" width="15.8" height="20.6" fill="#292929" stroke="#c8c8c8" stroke-width="1.5"/>
<path d="M37.4 121.2L40.5 125.2L43.6 121.2" fill="none" stroke="#fff" stroke-width="1.5" stroke-linecap="butt" stroke-linejoin="miter"/>
<path d="M80.8 51.8L86.4 66.2M87.8 51.8L82.2 66.2" stroke="#d4d4d4" stroke-width="1.6" fill="none"/>
<circle cx="80.6" cy="68.4" r="2.3" fill="none" stroke="#3f96e0" stroke-width="1.6"/><circle cx="88" cy="68.4" r="2.3" fill="none" stroke="#3f96e0" stroke-width="1.6"/>
<path d="M81.5 99.3H74.7V83.9H80.3L82 85.5" fill="none" stroke="#c8c8c8" stroke-width="1.5"/>
<path d="M82.3 87.6H89.2L93.4 91.8V102.6H82.3Z" fill="#292929" stroke="#c8c8c8" stroke-width="1.5" stroke-linejoin="round"/>
<path d="M89 87.8V92H93.2M85 95.2H90.6M85 98.3H90.6" fill="none" stroke="#c8c8c8" stroke-width="1.2"/>
<path d="M104.4 91.3L107.6 95.2L110.8 91.3" fill="none" stroke="#fff" stroke-width="1.5" stroke-linecap="butt" stroke-linejoin="miter"/>
<path d="M86.6 121.4L92 116L94 118L88.6 123.4" fill="none" stroke="#d8d8d8" stroke-width="1.5" stroke-linejoin="round"/>
<path d="M83.8 119.4L90.6 126.2L88.4 128.4L81.6 121.6Z" fill="#292929" stroke="#d8d8d8" stroke-width="1.4" stroke-linejoin="round"/>
<path d="M81.4 121.8L74.6 124.2C76 128.2 79.2 131.6 83.4 133.4L88.2 128.6Z" fill="#3a3226" stroke="#f0c264" stroke-width="1.4" stroke-linejoin="round"/>
<path d="M78 129.4L85.8 130.8L83.4 133.2C81.2 132.4 79.4 131.2 78 129.4Z" fill="#ee9b2c"/>
<rect x="139.5" y="56.5" width="143" height="29" rx="5" fill="none" stroke="#707070"/>
<rect x="285.5" y="56.5" width="61" height="29" rx="5" fill="none" stroke="#707070"/>
<path d="M272.2 69.2L275.4 73.2L278.6 69.2" fill="none" stroke="#fff" stroke-width="1.5" stroke-linecap="butt" stroke-linejoin="miter"/>
<path d="M336.2 69.2L339.4 73.2L342.6 69.2" fill="none" stroke="#fff" stroke-width="1.5" stroke-linecap="butt" stroke-linejoin="miter"/>
<path d="M368.7 65.8L371.3 62.2L373.9 65.8" fill="none" stroke="#4a98cc" stroke-width="1.4" stroke-linecap="butt" stroke-linejoin="miter"/>
<path d="M400.4 62.2L403.0 65.8L405.6 62.2" fill="none" stroke="#4a98cc" stroke-width="1.4" stroke-linecap="butt" stroke-linejoin="miter"/>
<path d="M211.9 118.1H223.1" stroke="#cfcfcf" stroke-width="1.7"/>
<path d="M238.4 109.6L241.5 113.6L244.6 109.6" fill="none" stroke="#fff" stroke-width="1.5" stroke-linecap="butt" stroke-linejoin="miter"/>
<path d="M254.5 96V126" stroke="#4d4d4d" stroke-width="1"/>
<path d="M262.5 101.2H280.5M262.5 110H280.5M262.5 101.2V118M271.5 101.2V118M280.5 101.2V118" fill="none" stroke="#c8c8c8" stroke-width="1.2" stroke-dasharray="1.3 1.5"/>
<path d="M261.8 119H281.2" stroke="#d8d8d8" stroke-width="1.8"/>
<path d="M292.2 109.6L295.3 113.6L298.4 109.6" fill="none" stroke="#fff" stroke-width="1.5" stroke-linecap="butt" stroke-linejoin="miter"/>
<path d="M308.5 96V126" stroke="#4d4d4d" stroke-width="1"/>
<path d="M319.6 109L326 102L331 107.8L324.8 114.8Z" fill="none" stroke="#d4d4d4" stroke-width="1.4" stroke-linejoin="round"/>
<path d="M326.2 105V102.6C326.2 100.2 329.6 100.2 329.6 102.6V106" fill="none" stroke="#d4d4d4" stroke-width="1.3"/>
<path d="M331.6 105.4C333.6 106.6 334 109.4 333.4 112" fill="none" stroke="#4aa0d8" stroke-width="1.8" stroke-linecap="round"/>
<rect x="316" y="116" width="20" height="5" fill="#f6f41e"/>
<path d="M346.4 109.6L349.5 113.6L352.6 109.6" fill="none" stroke="#fff" stroke-width="1.5" stroke-linecap="butt" stroke-linejoin="miter"/>
<rect x="367" y="116" width="20.3" height="5" fill="#f00f0f"/>
<path d="M397.4 109.6L400.5 113.6L403.6 109.6" fill="none" stroke="#fff" stroke-width="1.5" stroke-linecap="butt" stroke-linejoin="miter"/>
<path d="M437.0 61.5H455.5" stroke="#cfcfcf" stroke-width="1.5"/>
<path d="M439.8 66.8H452.7" stroke="#cfcfcf" stroke-width="1.5"/>
<path d="M437.0 72.1H455.5" stroke="#cfcfcf" stroke-width="1.5"/>
<path d="M469.0 65.2H487.5" stroke="#cfcfcf" stroke-width="1.5"/>
<path d="M471.8 70.5H484.7" stroke="#cfcfcf" stroke-width="1.5"/>
<path d="M469.0 75.8H487.5" stroke="#cfcfcf" stroke-width="1.5"/>
<rect x="495.5" y="56.5" width="29.5" height="29" rx="4.5" fill="#3b3b3b" stroke="#8e8e8e"/>
<path d="M501.0 69.9H519.5" stroke="#cfcfcf" stroke-width="1.5"/>
<path d="M503.8 75.2H516.7" stroke="#cfcfcf" stroke-width="1.5"/>
<path d="M501.0 80.5H519.5" stroke="#cfcfcf" stroke-width="1.5"/>
<path d="M527.5 56V86" stroke="#4d4d4d" stroke-width="1"/>
<path d="M541.5 79.5L554.8 66.2M549.6 65.6H555.4V71.4" fill="none" stroke="#4aa0d8" stroke-width="1.5"/>
<path d="M563.2 69.4L566.5 73.4L569.8 69.4" fill="none" stroke="#fff" stroke-width="1.5" stroke-linecap="butt" stroke-linejoin="miter"/>
<path d="M582.5 56V86" stroke="#4d4d4d" stroke-width="1"/>
<path d="M593 66.5L597 70.3L593 74.1" fill="none" stroke="#4aa0d8" stroke-width="1.6"/>
<path d="M603.2 76V66.6M606 76V66.6M607.6 66.6H602.4C599.4 66.6 599.4 71.4 602.4 71.4H603.2" fill="none" stroke="#d0d0d0" stroke-width="1.3"/>
<path d="M602.6 66.6C599.4 66.6 599.4 71.4 602.6 71.4H603.2V66.6Z" fill="#d0d0d0"/>
<path d="M620.0 69.4L623.3 73.4L626.6 69.4" fill="none" stroke="#fff" stroke-width="1.5" stroke-linecap="butt" stroke-linejoin="miter"/>
<path d="M641.5 55V133" stroke="#4d4d4d" stroke-width="1"/>
<path d="M673.6 72.4C673.6 76 671 77.8 665 77.8M668 74.8L664.8 77.8L668 80.8" fill="none" stroke="#4aa0d8" stroke-width="1.5"/>
<path d="M437.0 103.0H455.5" stroke="#cfcfcf" stroke-width="1.5"/>
<path d="M437.0 108.0H449.9" stroke="#cfcfcf" stroke-width="1.5"/>
<path d="M437.0 113.0H455.5" stroke="#cfcfcf" stroke-width="1.5"/>
<path d="M437.0 118.0H449.9" stroke="#cfcfcf" stroke-width="1.5"/>
<path d="M469.0 103.0H487.5" stroke="#cfcfcf" stroke-width="1.5"/>
<path d="M471.8 108.0H484.7" stroke="#cfcfcf" stroke-width="1.5"/>
<path d="M469.0 113.0H487.5" stroke="#cfcfcf" stroke-width="1.5"/>
<path d="M471.8 118.0H484.7" stroke="#cfcfcf" stroke-width="1.5"/>
<path d="M501.0 103.0H519.5" stroke="#cfcfcf" stroke-width="1.5"/>
<path d="M506.6 108.0H519.5" stroke="#cfcfcf" stroke-width="1.5"/>
<path d="M501.0 113.0H519.5" stroke="#cfcfcf" stroke-width="1.5"/>
<path d="M506.6 118.0H519.5" stroke="#cfcfcf" stroke-width="1.5"/>
<path d="M527.5 96V126" stroke="#4d4d4d" stroke-width="1"/>
<path d="M536.0 103.0H554.5" stroke="#cfcfcf" stroke-width="1.5"/>
<path d="M536.0 118.0H554.5" stroke="#cfcfcf" stroke-width="1.5"/>
<path d="M545.0 108.0H554.5" stroke="#cfcfcf" stroke-width="1.5"/>
<path d="M545.0 113.0H554.5" stroke="#cfcfcf" stroke-width="1.5"/>
<path d="M536.2 110.5H543.2M539.2 107.5L536.2 110.5L539.2 113.5" fill="none" stroke="#4aa0d8" stroke-width="1.4"/>
<path d="M568.0 103.0H586.5" stroke="#cfcfcf" stroke-width="1.5"/>
<path d="M568.0 118.0H586.5" stroke="#cfcfcf" stroke-width="1.5"/>
<path d="M577.0 108.0H586.5" stroke="#cfcfcf" stroke-width="1.5"/>
<path d="M577.0 113.0H586.5" stroke="#cfcfcf" stroke-width="1.5"/>
<path d="M568 110.5H575M572 107.5L575 110.5L572 113.5" fill="none" stroke="#4aa0d8" stroke-width="1.4"/>
<rect x="654.8" y="101.8" width="17.6" height="17.4" fill="none" stroke="#c8c8c8" stroke-width="1.5"/>
<path d="M654.8 104.6H672.4M654.8 116.2H672.4M663.6 101.8V104.6M663.6 116.2V119.2" stroke="#c8c8c8" stroke-width="1.1" fill="none"/>
<rect x="655.2" y="104.8" width="16.6" height="11.2" fill="#2a70bc"/>
<path d="M657.4 110.4H669.8M660 107.8L657.4 110.4L660 113M667.2 107.8L669.8 110.4L667.2 113" fill="none" stroke="#8cc4f0" stroke-width="1.3"/>
<path d="M800.8 109.8L804.3 113.8L807.8 109.8" fill="none" stroke="#fff" stroke-width="1.5" stroke-linecap="butt" stroke-linejoin="miter"/>
<rect x="836.5" y="56.5" width="179" height="29" rx="5" fill="none" stroke="#707070"/>
<path d="M1004.6 69.2L1007.9 73.2L1011.2 69.2" fill="none" stroke="#fff" stroke-width="1.5" stroke-linecap="butt" stroke-linejoin="miter"/>
<path d="M870.6 109.2L874.1 113.2L877.6 109.2" fill="none" stroke="#fff" stroke-width="1.5" stroke-linecap="butt" stroke-linejoin="miter"/>
<path d="M951.5 96V126" stroke="#4d4d4d" stroke-width="1"/>
<path d="M959.8 106.4H970.8M963 103.2L959.8 106.4L963 109.6" fill="none" stroke="#4aa0d8" stroke-width="1.5"/>
<path d="M991.4 115.8H1001.2M998 112.6L1001.2 115.8L998 119" fill="none" stroke="#4aa0d8" stroke-width="1.5"/>
<rect x="1071" y="57" width="16" height="8.4" fill="#e32b1f"/>
<rect x="1071" y="66.2" width="10.4" height="7.6" fill="#2b7cd3"/>
<rect x="1071" y="74.4" width="18.6" height="8.8" fill="#e32b1f"/>
<path d="M1064.9 57H1099.1000000000001V83.2H1064.9ZM1070.8000000000002 57V83.2M1087.0 57V83.2M1093.2 57V83.2M1064.9 64.8H1099.1000000000001M1064.9 74.4H1099.1000000000001" fill="none" stroke="#bdbdbd" stroke-width="1.5"/>
<path d="M1116.4 119.8L1119.5 123.8L1122.6 119.8" fill="none" stroke="#fff" stroke-width="1.5" stroke-linecap="butt" stroke-linejoin="miter"/>
<rect x="1159.2" y="64.8" width="23.6" height="18" fill="#2b7cd3"/>
<path d="M1170.7 64.8V83M1159.2 74.4H1183" stroke="#5cb0f2" stroke-width="1.2"/>
<path d="M1148 57H1182.6V82.8H1148ZM1159.2 57V82.8M1170.7 57V82.8M1148 64.8H1182.6M1148 74.4H1182.6" fill="none" stroke="#bdbdbd" stroke-width="1.5"/>
<path d="M1170.7 64.8V83M1159.2 74.4H1183M1159.2 64.8H1183M1159.2 64.8V83" stroke="#5cb0f2" stroke-width="1.2" fill="none"/>
<path d="M1171.5 83.6L1184.3999999999999 68.8C1186.6 65.6 1184.8 63.2 1181.0 65.9L1168.8999999999999 81.4Z" fill="#292929" stroke="#d4d4d4" stroke-width="1.3" stroke-linejoin="round"/>
<path d="M1168.6 81.2L1171.6 84C1171.1999999999998 88.4 1165.6 91.4 1157.0 89C1161.0 87.6 1161.8 81.4 1168.6 81.2Z" fill="#2277d0" stroke="#5cb0f2" stroke-width="0.9" stroke-linejoin="round"/>
<path d="M1180.5 119.8L1183.6 123.8L1186.7 119.8" fill="none" stroke="#fff" stroke-width="1.5" stroke-linecap="butt" stroke-linejoin="miter"/>
<rect x="1218.4" y="62.6" width="22.5" height="14.4" fill="#2b7cd3"/>
<path d="M1213 57H1247.4V82.8H1213ZM1218.4 57V82.8M1240.9 57V82.8M1213 62.6H1247.4M1213 77H1247.4" fill="none" stroke="#bdbdbd" stroke-width="1.5"/>
<rect x="1218.4" y="62.6" width="22.5" height="14.4" fill="none" stroke="#5cb0f2" stroke-width="1.2"/>
<path d="M1236.3000000000002 83.6L1249.2 68.8C1251.4 65.6 1249.6000000000001 63.2 1245.8000000000002 65.9L1233.7 81.4Z" fill="#292929" stroke="#d4d4d4" stroke-width="1.3" stroke-linejoin="round"/>
<path d="M1233.4 81.2L1236.4 84C1236.0 88.4 1230.4 91.4 1221.8000000000002 89C1225.8000000000002 87.6 1226.6000000000001 81.4 1233.4 81.2Z" fill="#2277d0" stroke="#5cb0f2" stroke-width="0.9" stroke-linejoin="round"/>
<path d="M1247.7 119.8L1250.8 123.8L1253.9 119.8" fill="none" stroke="#fff" stroke-width="1.5" stroke-linecap="butt" stroke-linejoin="miter"/>
<path d="M1288 57H1322.2V83.2H1288ZM1299.6 57V83.2M1311 57V83.2M1288 65.6H1322.2M1288 74.6H1322.2" fill="none" stroke="#c8c8c8" stroke-width="1.5"/>
<rect x="1294.5" y="65.6" width="30" height="9" fill="#2277d0" stroke="#5cb0f2" stroke-width="1.1"/>
<path d="M1299.5 65.6V74.6M1310.9 65.6V74.6" stroke="#5cb0f2" stroke-width="1.1"/>
<path d="M1302 69.8H1285.6M1293.6 61.6L1285.4 69.8L1293.6 78" fill="none" stroke="#6ab4f0" stroke-width="1.5"/>
<path d="M1300.6 121.4L1304.3 125.6L1308.0 121.4" fill="none" stroke="#fff" stroke-width="1.5" stroke-linecap="butt" stroke-linejoin="miter"/>
<path d="M1342 65.6V57H1376.2V65.6M1342 74.6V83.2H1376.2V74.6M1342 65.6H1376.2M1342 74.6H1376.2M1353.2 57V83.2M1364.6 57V83.2" fill="none" stroke="#c8c8c8" stroke-width="1.5"/>
<path d="M1346.6 65.6H1364.6L1367.4 70.1L1364.6 74.6H1346.6Z" fill="#2277d0" stroke="#5cb0f2" stroke-width="1.1"/>
<path d="M1353.2 65.6V74.6M1359.4 65.6V74.6" stroke="#5cb0f2" stroke-width="1.1"/>
<path d="M1364.4 63.8L1378 77.8M1378 63.8L1364.4 77.8" stroke="#e2566a" stroke-width="1.6" fill="none"/>
<path d="M1354.8 121.4L1358.5 125.6L1362.2 121.4" fill="none" stroke="#fff" stroke-width="1.5" stroke-linecap="butt" stroke-linejoin="miter"/>
<path d="M1396.2 57H1430.4V83.2H1396.2ZM1405.1000000000001 57V83.2M1421.4 57V83.2M1396.2 65.6H1430.4M1396.2 74.6H1430.4" fill="none" stroke="#c8c8c8" stroke-width="1.5"/>
<rect x="1405.1" y="65.6" width="16.3" height="9" fill="#2277d0" stroke="#5cb0f2" stroke-width="1.1"/>
<path d="M1403.4 52.2H1422.4M1403.4 50V54.4M1422.4 50V54.4" stroke="#6ab0e0" stroke-width="1.4" fill="none"/>
<path d="M1408.8 119.4L1412.5 123.6L1416.2 119.4" fill="none" stroke="#fff" stroke-width="1.5" stroke-linecap="butt" stroke-linejoin="miter"/>
<path d="M1481.4 55.6V52.8H1467.2L1475 61L1467.2 69.4H1481.4V66.4" fill="none" stroke="#d4d4d4" stroke-width="1.4" stroke-linejoin="miter"/>
<path d="M1566.2 59.8L1569.6 63.8L1573.0 59.8" fill="none" stroke="#fff" stroke-width="1.5" stroke-linecap="butt" stroke-linejoin="miter"/>
<rect x="1464.8" y="84.9" width="18.6" height="16.3" fill="#1f2a36" stroke="#c8c8c8" stroke-width="1.4"/>
<path d="M1464.8 87.4H1483.4" stroke="#c8c8c8" stroke-width="1.2"/>
<path d="M1473.6 89.4V98.4M1469.6 94.6L1473.6 98.6L1477.6 94.6" fill="none" stroke="#4aa0d8" stroke-width="1.4"/>
<path d="M1513.0 90.8L1516.4 94.8L1519.8 90.8" fill="none" stroke="#fff" stroke-width="1.5" stroke-linecap="butt" stroke-linejoin="miter"/>
<path d="M1465 126.6L1476.1 116.2L1483 123.2L1472.4 133.8Z" fill="#332838" stroke="#c690d2" stroke-width="1.4" stroke-linejoin="round"/>
<path d="M1465 126.6L1469.6 122.3L1476.8 129.4L1472.4 133.8Z" fill="#a233ac" stroke="#c690d2" stroke-width="1.2" stroke-linejoin="round"/>
<path d="M1528.0 122.6L1531.3 126.6L1534.6 122.6" fill="none" stroke="#fff" stroke-width="1.5" stroke-linecap="butt" stroke-linejoin="miter"/>
<path d="M1606.8 62.2H1626.4V65L1619.8 71.6V79.8H1614.4V71.6L1606.8 65Z" fill="none" stroke="#d4d4d4" stroke-width="1.4" stroke-linejoin="round"/>
<path d="M1623.4 119.6L1626.8 123.6L1630.2 119.6" fill="none" stroke="#fff" stroke-width="1.5" stroke-linecap="butt" stroke-linejoin="miter"/>
<circle cx="1670.4" cy="65.8" r="12.6" fill="none" stroke="#d4d4d4" stroke-width="1.5"/>
<path d="M1661.4 74.8L1647.8 88.4" stroke="#d4d4d4" stroke-width="1.6" fill="none"/>
<path d="M1683.8 119.6L1687.3 123.6L1690.8 119.6" fill="none" stroke="#fff" stroke-width="1.5" stroke-linecap="butt" stroke-linejoin="miter"/>
<rect x="1727.2" y="52.7" width="33.6" height="33.9" fill="none" stroke="#c4502c" stroke-width="2"/>
<rect x="1731" y="57.6" width="10.4" height="10.2" fill="none" stroke="#c4502c" stroke-width="1.6"/>
<rect x="1746.6" y="57.6" width="10.4" height="10.2" fill="none" stroke="#c4502c" stroke-width="1.6"/>
<rect x="1731" y="72.8" width="10.4" height="10.2" fill="none" stroke="#c4502c" stroke-width="1.6"/>
<rect x="1746.6" y="72.8" width="10.4" height="10.2" fill="none" stroke="#c4502c" stroke-width="1.6"/></svg>
<div id="watermark" class="r" style="left:0;top:0;width:1870px;height:963px;opacity:0.8;pointer-events:none;">
<div class="t" dir="rtl" lang="ar" style="left:826px;top:848px;font-family:'DejaVu Sans',sans-serif;font-weight:700;font-size:66px;color:#d4d4d4;-webkit-text-stroke:3px #d4d4d4;transform:scaleX(1.09);">نفذلي</div>
<span class="t" style="left:835.41px;top:924.30px;font-size:35px;transform:scaleX(1.0084);font-weight:700;color:#d4d4d4;">nafezly.com</span>
</div>
</body></html>
